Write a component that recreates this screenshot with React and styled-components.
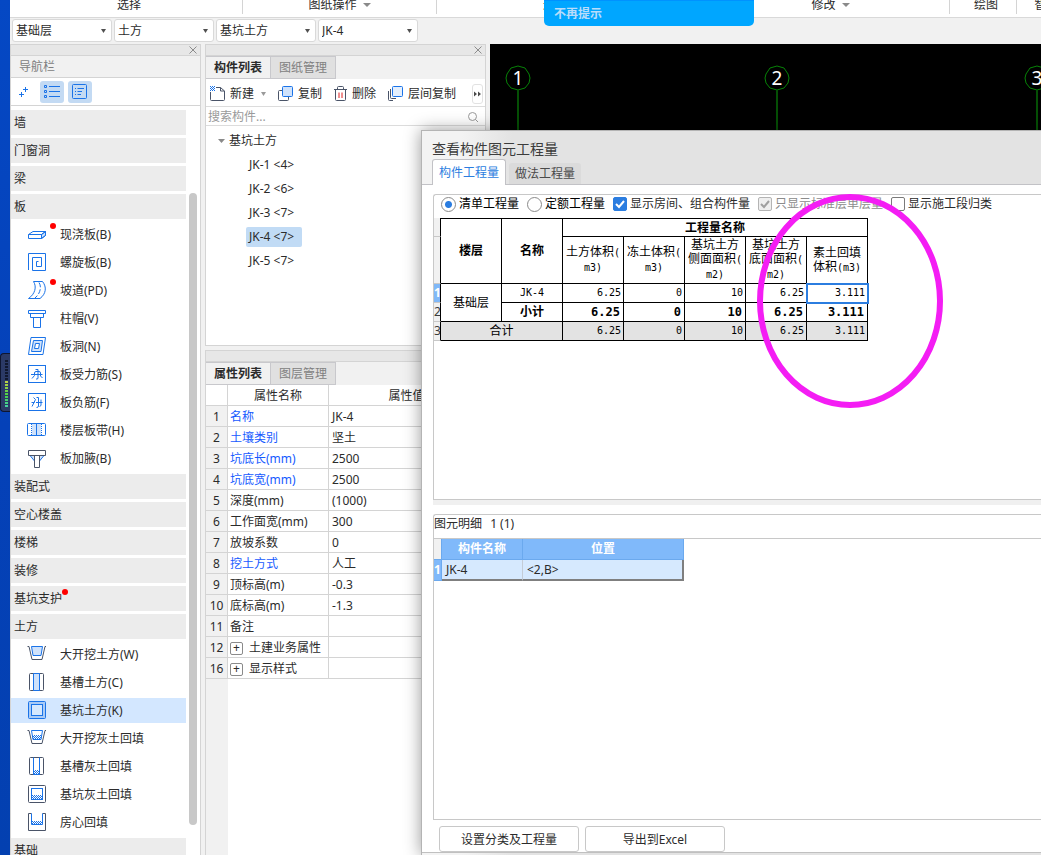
import React, { useState } from 'react';
import styled, { createGlobalStyle, css } from 'styled-components';

const BLUE = '#1a73e8';
const DARK = '#4a5468';
const PALE = '#cfe2fb';

const ribbonGroups = [
    { label: '选择', width: 233 },
    { label: '图纸操作', width: 194, arrow: true },
    { label: '通用操作', width: 275, arrow: true },
    { label: '修改', width: 238, arrow: true },
    { label: '绘图', width: 67 },
    { label: '智能布置', width: 78 },
];

const filters = [
    { name: '楼层', value: '基础层' },
    { name: '构件大类', value: '土方' },
    { name: '构件类型', value: '基坑土方' },
    { name: '构件', value: 'JK-4' },
];

const navRows = [
    { group: '墙' },
    { group: '门窗洞' },
    { group: '梁' },
    { group: '板' },
    { item: '现浇板(B)', icon: 'slab', dot: true },
    { item: '螺旋板(B)', icon: 'spiral' },
    { item: '坡道(PD)', icon: 'ramp', dot: true },
    { item: '柱帽(V)', icon: 'cap' },
    { item: '板洞(N)', icon: 'hole' },
    { item: '板受力筋(S)', icon: 'rebar' },
    { item: '板负筋(F)', icon: 'negRebar' },
    { item: '楼层板带(H)', icon: 'band' },
    { item: '板加腋(B)', icon: 'haunch' },
    { group: '装配式' },
    { group: '空心楼盖' },
    { group: '楼梯' },
    { group: '装修' },
    { group: '基坑支护', dot: true },
    { group: '土方' },
    { item: '大开挖土方(W)', icon: 'openCut' },
    { item: '基槽土方(C)', icon: 'trench' },
    { item: '基坑土方(K)', icon: 'pit' },
    { item: '大开挖灰土回填', icon: 'openCutFill' },
    { item: '基槽灰土回填', icon: 'trenchFill' },
    { item: '基坑灰土回填', icon: 'pitFill' },
    { item: '房心回填', icon: 'roomFill' },
    { group: '基础' },
];

const components = ['JK-1 <4>', 'JK-2 <6>', 'JK-3 <7>', 'JK-4 <7>', 'JK-5 <7>'];

const properties = [
    { no: 1, name: '名称', value: 'JK-4', blue: true },
    { no: 2, name: '土壤类别', value: '坚土', blue: true },
    { no: 3, name: '坑底长(mm)', value: '2500', blue: true },
    { no: 4, name: '坑底宽(mm)', value: '2500', blue: true },
    { no: 5, name: '深度(mm)', value: '(1000)' },
    { no: 6, name: '工作面宽(mm)', value: '300' },
    { no: 7, name: '放坡系数', value: '0' },
    { no: 8, name: '挖土方式', value: '人工', blue: true },
    { no: 9, name: '顶标高(m)', value: '-0.3' },
    { no: 10, name: '底标高(m)', value: '-1.3' },
    { no: 11, name: '备注', value: '' },
    { no: 12, name: '土建业务属性', value: '', expand: true },
    { no: 16, name: '显示样式', value: '', expand: true },
];

const quantities = ['6.25', '0', '10', '6.25', '3.111'];

const glyphs = {
    slab: (
        <>
            <path d="M14.5 10.5L18.5 7.5V11.5L14.5 14.5Z" fill={PALE} />
            <path d="M1.5 10.5H14.5V14.5H1.5ZM1.5 10.5L6 7.5H18.5L14.5 10.5M18.5 7.5V11.5L14.5 14.5" />
        </>
    ),
    spiral: <path d="M1.5 18V1.5H18.5V18.5H5.5V5.5H14.5V14.5H9.5V9.5H11.5" />,
    ramp: (
        <>
            <path d="M6.5 1.5H15.5C20 7 19 14 13 18.5H1.5C8 14 10 7 6.5 1.5Z" />
            <path d="M12 2.5C15 7 13 14 8 18" strokeDasharray="5 2" />
        </>
    ),
    cap: <path d="M1.5 2.5H18.5V5.5H1.5ZM3.5 5.5V9.5H16.5V5.5M6.5 9.5V19.5H13.5V9.5" />,
    hole: (
        <>
            <path d="M4 1.5H18.5L16 18.5H1.5Z" />
            <path d="M6.5 4.5H15.5L14 15.5H4.5Z" fill={PALE} />
            <path d="M8.5 7.5H12.5L11.5 12.5H7.5Z" fill="#fff" />
        </>
    ),
    rebar: (
        <>
            <rect x="1.5" y="1.5" width="17" height="17" />
            <path d="M4 10.5H15.5M8.5 5.5H11V14Q11 15.5 9 15M5 14.5L7.5 11.5V9Q7.5 7.5 9 7.5H12Q13.5 7.5 13.5 9V12L15.5 14" />
        </>
    ),
    negRebar: (
        <>
            <rect x="1.5" y="1.5" width="17" height="17" />
            <path d="M4.5 10.5H7.5M5 14.5L8.5 7.5L6.5 5.5M9 10.5H15.5M9.5 5.5H11.5V14Q11.5 15.5 9.5 15.5M14 7.5V13.5L12.5 14.5" />
        </>
    ),
    band: (
        <>
            <rect x="5" y="4" width="9" height="12" fill={PALE} stroke="none" />
            <rect x="0.5" y="3.5" width="18" height="12" rx="1" />
            <path d="M9.5 3.5V15.5" />
            <path d="M4.5 4V15.5M14.5 4V15.5" strokeDasharray="1 1" />
        </>
    ),
    haunch: (
        <>
            <path d="M3 7.5L7.5 13V7.5M17 7.5L12.5 13V7.5" fill={PALE} />
            <path d="M1.5 2.5H18.5V7.5H1.5ZM7.5 7.5V19.5H12.5V7.5" stroke={DARK} />
        </>
    ),
    openCut: (
        <>
            <path d="M0.5 2.5H2L5 15.5H15L18 2.5H19" stroke={DARK} />
            <path d="M4.5 2.5H15.5L14 11.5H6Z" fill={PALE} />
        </>
    ),
    trench: (
        <>
            <rect x="2.5" y="1.5" width="14" height="17" rx="1" stroke={DARK} />
            <path d="M6.5 1.5H12.5V18.5H6.5Z" fill={PALE} />
        </>
    ),
    pit: (
        <>
            <rect x="1.5" y="1.5" width="17" height="17" rx="1" fill="#a9cbf6" />
            <rect x="4.5" y="4.5" width="11" height="11" fill="#d5e8fe" />
        </>
    ),
    openCutFill: (
        <>
            <path d="M0.5 2.5H2L5 15.5H15L18 2.5H19" stroke={DARK} />
            <path d="M5 7H15L14 12H6Z" fill="url(#soil)" stroke="none" />
            <path d="M4.5 2.5L6 11.5H14L15.5 2.5Z" />
        </>
    ),
    trenchFill: (
        <>
            <rect x="2.5" y="1.5" width="14" height="17" rx="1" stroke={DARK} />
            <rect x="7" y="14" width="5" height="4" fill="url(#soil)" stroke="none" />
            <path d="M6.5 1.5V18.5H12.5V1.5" />
        </>
    ),
    pitFill: (
        <>
            <rect x="1.5" y="1.5" width="17" height="17" rx="1" stroke={DARK} />
            <rect x="5" y="11" width="10" height="4" fill="url(#soil)" stroke="none" />
            <rect x="4.5" y="4.5" width="11" height="11" />
        </>
    ),
    roomFill: (
        <>
            <path d="M4.5 1.5H1.5V18.5H18.5V1.5H15.5" stroke={DARK} />
            <rect x="5" y="9" width="10" height="3" fill="url(#soil)" stroke="none" />
            <path d="M4.5 1.5V12.5H15.5V1.5" />
        </>
    ),
};

// checkered fill shared by the backfill icons and the "new" icon
function SoilPattern() {
    return (
        <svg width="0" height="0" aria-hidden="true">
            <defs>
                <pattern id="soil" width="2" height="2" patternUnits="userSpaceOnUse">
                    <path d="M0 0H1V1H0ZM1 1H2V2H1Z" fill={BLUE} stroke="none" />
                </pattern>
            </defs>
        </svg>
    );
}

function NavIcon({ name }) {
    return (
        <svg width="20" height="21" viewBox="0 0 20 21" fill="none" stroke={BLUE} aria-hidden="true">
            {glyphs[name]}
        </svg>
    );
}

function Arrow({ size = 7, color = '#8a8a8a' }) {
    return (
        <svg width={size} height="4" viewBox="0 0 8 4" preserveAspectRatio="none" aria-hidden="true">
            <path d="M0 0H8L4 4Z" fill={color} />
        </svg>
    );
}

function PanelStrip({ closable }) {
    return (
        <Strip>
            {closable && (
                <CloseButton aria-label="关闭">
                    <svg width="8" height="8" viewBox="0 0 8 8" stroke="#8c8c8c">
                        <path d="M0.5 0.5L7.5 7.5M7.5 0.5L0.5 7.5" />
                    </svg>
                </CloseButton>
            )}
        </Strip>
    );
}

function Navigation() {
    const [active, setActive] = useState('基坑土方(K)');
    return (
        <NavPanel>
            <PanelStrip closable />
            <NavTitle>导航栏</NavTitle>
            <NavTools>
                <ToolToggle aria-label="添加">
                    <svg width="10" height="12" viewBox="0 0 10 12" stroke={BLUE} fill="none">
                        <path d="M6.5 1V6M4 3.5H9M2.5 6V11M0 8.5H5" />
                    </svg>
                </ToolToggle>
                <ToolToggle $on aria-label="列表">
                    <svg width="16" height="15" viewBox="0 0 16 15" stroke={BLUE} fill="none">
                        <path d="M0.5 1.5h2v2h-2zM0.5 6.5h2v2h-2zM0.5 11.5h2v2h-2zM5 2.5H16M5 7.5H16M5 12.5H16" />
                    </svg>
                </ToolToggle>
                <ToolToggle $on aria-label="详细">
                    <svg width="16" height="16" viewBox="0 0 16 16" stroke={BLUE} fill="none">
                        <rect x="0.5" y="0.5" width="14" height="14" rx="1" />
                        <path d="M3 4.5h1M5.5 4.5H12M3 7.5h1M5.5 7.5H10M3 10.5h1M5.5 10.5H9" />
                    </svg>
                </ToolToggle>
            </NavTools>
            <NavBody>
                <NavList>
                    {navRows.map((row) =>
                        row.group ? (
                            <NavGroup key={row.group}>
                                <Dotted $dot={row.dot}>{row.group}</Dotted>
                            </NavGroup>
                        ) : (
                            <NavItem
                                key={row.item}
                                $active={row.item === active}
                                onClick={() => setActive(row.item)}
                            >
                                <Dotted $dot={row.dot} $away>
                                    <NavIcon name={row.icon} />
                                </Dotted>
                                {row.item}
                            </NavItem>
                        )
                    )}
                </NavList>
                <ScrollTrack>
                    <ScrollThumb />
                </ScrollTrack>
            </NavBody>
        </NavPanel>
    );
}

function ComponentList() {
    const [selected, setSelected] = useState('JK-4 <7>');
    return (
        <ListPanel>
            <PanelStrip closable />
            <Tabs>
                <Tab $active>构件列表</Tab>
                <Tab>图纸管理</Tab>
            </Tabs>
            <ListTools>
                <ListTool>
                    <svg width="17" height="17" viewBox="0 0 17 17" fill="none" stroke={DARK}>
                        <path d="M1.5 7V14.5Q1.5 15.5 2.5 15.5H14.5Q15.5 15.5 15.5 14.5V6L11.5 2.5H7M11.5 2.5V6H15.5" />
                        <rect x="1" y="1" width="5" height="5" fill="url(#soil)" stroke="none" />
                    </svg>
                    新建
                    <DropMark>
                        <Arrow size={5} color="#9a9a9a" />
                    </DropMark>
                </ListTool>
                <ListTool>
                    <svg width="17" height="17" viewBox="0 0 17 17" fill="none" stroke={DARK}>
                        <path d="M5 5.5H2.5Q1.5 5.5 1.5 6.5V14.5Q1.5 15.5 2.5 15.5H10.5Q11.5 15.5 11.5 14.5V12" />
                        <rect x="5.5" y="1.5" width="10" height="10" rx="1" fill={PALE} stroke={BLUE} />
                    </svg>
                    复制
                </ListTool>
                <ListTool>
                    <svg width="15" height="17" viewBox="0 0 15 17" fill="none" stroke={DARK}>
                        <path d="M1 4.5H14M4.5 4V2.5Q4.5 1.5 5.5 1.5H9.5Q10.5 1.5 10.5 2.5V4M2.5 4.5V14.5Q2.5 15.5 3.5 15.5H11.5Q12.5 15.5 12.5 14.5V4.5" />
                        <path d="M6 7.5V13M9 7.5V13" stroke="#e02020" />
                    </svg>
                    删除
                </ListTool>
                <ListTool>
                    <svg width="17" height="17" viewBox="0 0 17 17" fill="none" stroke={DARK}>
                        <path d="M1.5 6V14.5Q1.5 15.5 2.5 15.5H6M3.5 4V12.5Q3.5 13.5 4.5 13.5H9" />
                        <rect x="5.5" y="1.5" width="10" height="10" rx="1" fill="#e4effd" stroke={BLUE} />
                    </svg>
                    层间复制
                </ListTool>
                <MoreButton aria-label="更多">
                    <svg width="7" height="6" viewBox="0 0 7 6" fill="#4a4a4a">
                        <path d="M0 0.5L3 3L0 5.5ZM4 0.5L7 3L4 5.5Z" />
                    </svg>
                </MoreButton>
            </ListTools>
            <SearchRow>
                <SearchInput placeholder="搜索构件..." aria-label="搜索构件" />
                <svg width="12" height="12" viewBox="0 0 12 12" fill="none" stroke="#9a9a9a">
                    <circle cx="5.5" cy="5.5" r="4" />
                    <path d="M8.5 8.5L11 11" />
                </svg>
            </SearchRow>
            <Tree>
                <TreeRoot>
                    <Arrow size={7} />
                    基坑土方
                </TreeRoot>
                {components.map((name) => (
                    <li key={name}>
                        <TreeItem $active={name === selected} onClick={() => setSelected(name)}>
                            {name}
                        </TreeItem>
                    </li>
                ))}
            </Tree>
        </ListPanel>
    );
}

function PropertyList() {
    return (
        <PropPanel>
            <PanelStrip />
            <Tabs>
                <Tab $active>属性列表</Tab>
                <Tab>图层管理</Tab>
            </Tabs>
            <PropTable>
                <colgroup>
                    <col width="22" />
                    <col width="101" />
                    <col />
                </colgroup>
                <thead>
                    <tr>
                        <th aria-label="序号" />
                        <th>属性名称</th>
                        <th>属性值</th>
                    </tr>
                </thead>
                <tbody>
                    {properties.map((p) => (
                        <tr key={p.no}>
                            <PropNo>{p.no}</PropNo>
                            <PropName $blue={p.blue}>
                                {p.expand && <Expander aria-label={`展开${p.name}`}>+</Expander>}
                                {p.name}
                            </PropName>
                            <td>{p.value}</td>
                        </tr>
                    ))}
                </tbody>
            </PropTable>
            <PropRest />
        </PropPanel>
    );
}

function AxisMark({ x, label }) {
    return (
        <g>
            <path
                d={`M${x} 22L${x + 7} 24L${x + 11} 30L${x + 12} 34L${x + 11} 39L${x + 7} 44L${x} 46L${x - 7} 44L${x - 11} 39L${x - 12} 34L${x - 11} 30L${x - 7} 24Z`}
                fill="none"
                stroke="#078207"
            />
            <path d={`M${x} 46V900`} stroke="#054f05" strokeWidth="2" />
            <text x={x} y="41" textAnchor="middle" fill="#fff" fontSize="19">{label}</text>
        </g>
    );
}

function QuantityDialog() {
    const [mode, setMode] = useState('list');
    return (
        <Dialog role="dialog" aria-labelledby="dialog-title">
            <DialogTitle id="dialog-title">查看构件图元工程量</DialogTitle>
            <DialogTabs>
                <DialogTab $active>构件工程量</DialogTab>
                <DialogTab>做法工程量</DialogTab>
            </DialogTabs>
            <DialogBody>
                <Pane>
                    <Options>
                        <Option $strong>
                            <Radio name="mode" checked={mode === 'list'} onChange={() => setMode('list')} />
                            清单工程量
                        </Option>
                        <Option $strong>
                            <Radio name="mode" checked={mode === 'quota'} onChange={() => setMode('quota')} />
                            定额工程量
                        </Option>
                        <Option>
                            <Check defaultChecked />
                            显示房间、组合构件量
                        </Option>
                        <Option $disabled>
                            <Check defaultChecked disabled />
                            只显示标准层单层量
                        </Option>
                        <Option>
                            <Check />
                            显示施工段归类
                        </Option>
                    </Options>
                    <QuantityTable>
                        <colgroup>
                            <col width="7" />
                            {[1, 2, 3, 4, 5, 6, 7].map((n) => (
                                <col key={n} width="61" />
                            ))}
                        </colgroup>
                        <thead>
                            <TitleRow>
                                <RowMark aria-label="序号" />
                                <th rowSpan={2}>楼层</th>
                                <th rowSpan={2}>名称</th>
                                <th colSpan={5}>工程量名称</th>
                            </TitleRow>
                            <HeadRow>
                                <RowMark />
                                <th>土方体积<Half>(</Half><br /><Half>m3)</Half></th>
                                <th>冻土体积<Half>(</Half><br /><Half>m3)</Half></th>
                                <th>基坑土方<br />侧面面积<Half>(</Half><br /><Half>m2)</Half></th>
                                <th>基坑土方<br />底面面积<Half>(</Half><br /><Half>m2)</Half></th>
                                <th>素土回填<br />体积<Half>(m3)</Half></th>
                            </HeadRow>
                        </thead>
                        <tbody>
                            <tr>
                                <RowMark $active>1</RowMark>
                                <td rowSpan={2}>基础层</td>
                                <SongCell>JK-4</SongCell>
                                {quantities.map((q, i) => (
                                    <NumCell key={i} $selected={i === 4}>{q}</NumCell>
                                ))}
                            </tr>
                            <SubtotalRow>
                                <RowMark>2</RowMark>
                                <td>小计</td>
                                {quantities.map((q, i) => (
                                    <NumCell key={i} $bold>{q}</NumCell>
                                ))}
                            </SubtotalRow>
                            <TotalRow>
                                <RowMark>3</RowMark>
                                <td colSpan={2}>合计</td>
                                {quantities.map((q, i) => (
                                    <NumCell key={i}>{q}</NumCell>
                                ))}
                            </TotalRow>
                        </tbody>
                    </QuantityTable>
                </Pane>
                <Splitter />
                <Pane>
                    <DetailTitle>
                        图元明细 <span>1 (1)</span>
                    </DetailTitle>
                    <DetailTable>
                        <colgroup>
                            <col width="8" />
                            <col width="81" />
                            <col width="161" />
                        </colgroup>
                        <thead>
                            <tr>
                                <DetailMark aria-label="序号" />
                                <th>构件名称</th>
                                <th>位置</th>
                            </tr>
                        </thead>
                        <tbody>
                            <tr>
                                <DetailMark $active>1</DetailMark>
                                <td>JK-4</td>
                                <td>{'<2,B>'}</td>
                            </tr>
                        </tbody>
                    </DetailTable>
                </Pane>
            </DialogBody>
            <DialogFooter>
                <FooterButton>设置分类及工程量</FooterButton>
                <FooterButton>导出到Excel</FooterButton>
            </DialogFooter>
        </Dialog>
    );
}

function App() {
    return (
        <Screen>
            <GlobalStyle />
            <Desktop>
                <SoilPattern />
                <Meter>
                    {Array.from({ length: 16 }, (_, i) => (
                        <MeterBar key={i} style={{ background: i < 7 ? '#10182e' : `hsl(${70 + (i - 7) * 11}, 60%, 55%)` }} />
                    ))}
                </Meter>
            </Desktop>
            <Workspace>
                <Ribbon>
                    {ribbonGroups.map((g) => (
                        <RibbonGroup key={g.label} $width={g.width} $arrow={g.arrow}>
                            {g.label}
                            {g.arrow && <Arrow size={8} />}
                        </RibbonGroup>
                    ))}
                </Ribbon>
                <FilterBar>
                    {filters.map((f) => (
                        <SelectBox key={f.name}>
                            <Select aria-label={f.name}>
                                <option>{f.value}</option>
                            </Select>
                            <Arrow size={5} color="#505050" />
                        </SelectBox>
                    ))}
                </FilterBar>
                <Main>
                    <Navigation />
                    <Middle>
                        <ComponentList />
                        <PropertyList />
                    </Middle>
                    <Canvas>
                        <svg width="100%" height="100%" fontFamily="'Noto Sans', sans-serif">
                            <AxisMark x={28} label="1" />
                            <AxisMark x={287} label="2" />
                            <AxisMark x={547} label="3" />
                        </svg>
                    </Canvas>
                </Main>
            </Workspace>
            <Toast>不再提示</Toast>
            <QuantityDialog />
            <Marker width="188" height="216" viewBox="0 0 188 216" aria-hidden="true">
                <ellipse cx="94" cy="108" rx="90" ry="104" fill="none" stroke="#f41df4" strokeWidth="6" />
            </Marker>
        </Screen>
    );
}

const GlobalStyle = createGlobalStyle`
    *{
        box-sizing: border-box;
    }
    body{
        margin: 0;
        overflow: hidden;
        color: #2b2b2b;
        font: 12px/18px "Noto Sans", "Noto Sans CJK SC", sans-serif;
    }
    button, input, select{
        font: inherit;
        color: inherit;
        margin: 0;
        padding: 0;
        border: none;
        background: none;
    }
    svg{
        display: block;
        flex: none;
    }
    table{
        border-collapse: separate;
        border-spacing: 0;
        table-layout: fixed;
    }
    th, td{
        padding: 0;
        font-weight: normal;
        white-space: nowrap;
        overflow: hidden;
    }
`;

const Screen = styled.div`
    position: relative;
    display: flex;
    height: 100vh;
    overflow: hidden;
    background: #f1f1f1;
`;

const Desktop = styled.div`
    position: relative;
    flex: 0 0 10px;
    background: linear-gradient(#0548c4, #0541b8 50%, #0340b0);
`;

const Meter = styled.div`
    position: absolute;
    top: 353px;
    left: 0;
    width: 10px;
    height: 59px;
    padding: 6px 2px 0 4px;
    display: flex;
    flex-direction: column;
    gap: 1px;
    background: #2b3a66;
    border: 1px solid #0e1630;
    border-right: none;
    border-radius: 4px 0 0 4px;
`;

const MeterBar = styled.i`
    height: 2px;
`;

const Workspace = styled.div`
    flex: 1;
    min-width: 0;
    display: flex;
    flex-direction: column;
`;

const Ribbon = styled.div`
    display: flex;
    align-items: flex-end;
    height: 18px;
    padding-bottom: 3px;
    overflow: hidden;
    background: #fff;
    border-bottom: 1px solid #d9d9d9;
`;

const RibbonGroup = styled.div`
    flex: 0 0 ${(p) => p.$width}px;
    display: flex;
    align-items: center;
    justify-content: center;
    gap: 6px;
    padding-left: ${(p) => (p.$arrow ? '0' : '6px')};
    border-right: 1px solid #d4d4d4;
    line-height: 18px;
    white-space: nowrap;
`;

const FilterBar = styled.div`
    display: flex;
    gap: 2px;
    height: 26px;
    padding: 1px 2px 2px;
`;

const SelectBox = styled.div`
    display: flex;
    align-items: center;
    width: 100px;
    padding: 0 5px 0 3px;
    background: #fff;
    border: 1px solid #d9d9d9;
    border-radius: 3px;
`;

const Select = styled.select`
    flex: 1;
    min-width: 0;
    appearance: none;
    outline: none;
`;

const Main = styled.div`
    flex: 1;
    min-height: 0;
    display: flex;
`;

const NavPanel = styled.nav`
    flex: 0 0 191px;
    display: flex;
    flex-direction: column;
    background: #fff;
    border: solid #d4d4d4;
    border-width: 0 1px;
`;

const Strip = styled.div`
    flex: none;
    display: flex;
    align-items: center;
    justify-content: flex-end;
    height: 12px;
    padding-right: 3px;
    background: #e7e7e7;
    border: solid #d4d4d4;
    border-width: 1px 0;
`;

const CloseButton = styled.button`
    display: flex;
`;

const NavTitle = styled.h2`
    margin: 0;
    padding-left: 8px;
    font-size: 12px;
    font-weight: normal;
    line-height: 21px;
    color: #808080;
    background: #f1f1f1;
    border-bottom: 1px solid #d4d4d4;
`;

const NavTools = styled.div`
    flex: none;
    display: flex;
    align-items: center;
    gap: 4px;
    height: 28px;
    padding-left: 1px;
    border-bottom: 1px solid #d4d4d4;
`;

const ToolToggle = styled.button`
    display: flex;
    align-items: center;
    justify-content: center;
    width: 24px;
    height: 22px;
    border-radius: 3px;
    background: ${(p) => (p.$on ? '#c3daf3' : 'transparent')};
`;

const NavBody = styled.div`
    flex: 1;
    min-height: 0;
    display: flex;
    gap: 3px;
`;

const NavList = styled.div`
    flex: 1;
    display: flex;
    flex-direction: column;
    gap: 3px;
    padding-top: 4px;
    overflow: hidden;
`;

const rowStyle = css`
    flex: none;
    display: flex;
    align-items: center;
    height: 25px;
    text-align: left;
`;

const NavGroup = styled.button`
    ${rowStyle}
    padding-left: 3px;
    background: #ececec;
`;

const NavItem = styled.button`
    ${rowStyle}
    gap: 13px;
    padding-left: 16px;
    background: ${(p) => (p.$active ? '#d3e7ff' : 'transparent')};
`;

const Dotted = styled.span`
    position: relative;
    ${(p) =>
        p.$dot &&
        css`
            &::after{
                content: "";
                position: absolute;
                top: -1px;
                right: ${p.$away ? '-9px' : '-6px'};
                width: 6px;
                height: 6px;
                border-radius: 50%;
                background: #f00;
            }
        `}
`;

const ScrollTrack = styled.div`
    width: 11px;
    padding: 87px 3px 30px 0;
`;

const ScrollThumb = styled.div`
    height: 100%;
    border-radius: 4px;
    background: #c8c8c8;
`;

const Middle = styled.div`
    flex: 0 0 281px;
    display: flex;
    flex-direction: column;
    gap: 4px;
    margin: 0 4px;
`;

const ListPanel = styled.section`
    flex: 0 0 302px;
    display: flex;
    flex-direction: column;
    background: #fff;
    border: solid #d4d4d4;
    border-width: 0 1px 1px;
`;

const Tabs = styled.div`
    flex: none;
    display: flex;
    height: 23px;
    background: #f1f1f1;
`;

const Tab = styled.button`
    width: 65px;
    border: 1px solid #c8c8cc;
    border-left: none;
    line-height: 21px;
    color: ${(p) => (p.$active ? '#2b2b2b' : '#808080')};
    font-weight: ${(p) => (p.$active ? 'bold' : 'normal')};
    background: ${(p) => (p.$active ? '#f1f1f1' : '#e0e0e0')};
`;

const ListTools = styled.div`
    flex: none;
    display: flex;
    align-items: center;
    gap: 11px;
    height: 28px;
    padding: 2px 2px 0 3px;
    border-bottom: 1px solid #dcdcdc;
`;

const ListTool = styled.button`
    flex: none;
    display: flex;
    align-items: center;
    gap: 4px;
`;

const DropMark = styled.span`
    padding-left: 3px;
`;

const MoreButton = styled.button`
    display: flex;
    align-items: center;
    justify-content: center;
    width: 11px;
    height: 20px;
    margin-left: auto;
    border: 1px solid #e2e2e2;
    border-radius: 3px;
`;

const SearchRow = styled.div`
    flex: none;
    display: flex;
    align-items: center;
    height: 19px;
    padding: 2px 6px 0 2px;
    border-bottom: 1px solid #dcdcdc;
`;

const SearchInput = styled.input`
    flex: 1;
    outline: none;
    &::placeholder{
        color: #9a9a9a;
    }
`;

const Tree = styled.ul`
    margin: 0;
    padding: 3px 0 0 12px;
    list-style: none;
    line-height: 24px;
    li{
        height: 24px;
    }
`;

const TreeRoot = styled.li`
    display: flex;
    align-items: center;
    gap: 4px;
`;

const TreeItem = styled.button`
    margin-left: 28px;
    padding: 0 8px 0 3px;
    line-height: 20px;
    border-radius: 2px;
    background: ${(p) => (p.$active ? '#c1dbf5' : 'transparent')};
`;

const PropPanel = styled.section`
    flex: 1;
    min-height: 0;
    display: flex;
    flex-direction: column;
    background: #fff;
    border: solid #d4d4d4;
    border-width: 0 1px;
`;

const PropTable = styled.table`
    width: 100%;
    th, td{
        height: 21px;
        padding-top: 2px;
        border: solid #d4d4d4;
        border-width: 0 1px 1px 0;
        line-height: 18px;
    }
    td:last-child{
        padding-left: 3px;
    }
`;

const PropNo = styled.td`
    text-align: center;
    background: #f1f1f1;
`;

const PropName = styled.td`
    padding-left: 2px;
    color: ${(p) => (p.$blue ? '#165aff' : 'inherit')};
`;

const Expander = styled.button`
    width: 13px;
    height: 13px;
    margin-right: 6px;
    border: 1px solid #8a8a8a;
    border-radius: 2px;
    line-height: 10px;
`;

const PropRest = styled.div`
    flex: 1;
    border-left: 22px solid #f1f1f1;
`;

const Canvas = styled.div`
    flex: 1;
    min-width: 0;
    background: #000;
    overflow: hidden;
`;

const Toast = styled.div`
    position: absolute;
    top: 0;
    left: 544px;
    width: 210px;
    height: 26px;
    padding-left: 10px;
    line-height: 26px;
    color: #b9dcfa;
    font-weight: bold;
    background: #00a6ff;
    border-top: 1px solid #0092ff;
    border-radius: 0 0 5px 5px;
`;

const Dialog = styled.div`
    position: absolute;
    top: 130px;
    left: 421px;
    right: 0;
    bottom: 0;
    display: flex;
    flex-direction: column;
    background: linear-gradient(90deg, #f3f3f3 40px, #e3e3e3 90px);
    border: solid #b4b4b4;
    border-width: 1px 0 0 1px;
    box-shadow: 0 0 16px rgba(0, 0, 0, 0.4);
`;

const DialogTitle = styled.h1`
    margin: 0;
    padding: 8px 0 0 10px;
    font-size: 14px;
    font-weight: normal;
    line-height: 20px;
    color: #3c3c3c;
`;

const DialogTabs = styled.div`
    flex: none;
    display: flex;
    align-items: flex-end;
    gap: 3px;
    height: 26px;
    padding-left: 10px;
    background: linear-gradient(#c2c2c6, #c2c2c6) bottom / 100% 1px no-repeat;
`;

const DialogTab = styled.button`
    width: ${(p) => (p.$active ? '74px' : '72px')};
    line-height: ${(p) => (p.$active ? '25px' : '21px')};
    margin-bottom: ${(p) => (p.$active ? '0' : '1px')};
    color: ${(p) => (p.$active ? '#2b7de0' : '#4a4a4a')};
    background: ${(p) => (p.$active ? '#fff' : '#dbdbdb')};
    border: ${(p) => (p.$active ? '1px solid #c2c2c6' : 'none')};
    border-bottom: none;
    border-radius: 3px 3px 0 0;
`;

const DialogBody = styled.div`
    flex: 1;
    min-height: 0;
    display: flex;
    flex-direction: column;
    padding: 9px 0 0 11px;
    background: #fff;
`;

const Pane = styled.section`
    flex: 1 1 0;
    min-height: 0;
    overflow: hidden;
    border: 1px solid #c8c8c8;
    border-right: none;
    border-radius: 3px 0 0 0;
`;

const Splitter = styled.div`
    height: 5px;
    margin-bottom: 9px;
    background: #f0f0f0;
`;

const Options = styled.div`
    display: flex;
    align-items: center;
    height: 23px;
    padding: 0 0 5px 7px;
    gap: 8px;
`;

const Option = styled.label`
    display: flex;
    align-items: center;
    gap: 3px;
    white-space: nowrap;
    color: ${(p) => (p.$disabled ? '#8c8c8c' : p.$strong ? '#000' : '#2b2b2b')};
`;

const Radio = styled.input.attrs({ type: 'radio' })`
    appearance: none;
    flex: none;
    width: 15px;
    height: 15px;
    border: 1px solid #8a8a8a;
    border-radius: 50%;
    background: #fff;
    &:checked{
        background: radial-gradient(circle, #2b7de0 3px, #fff 4px);
    }
`;

const CHECK = (color) =>
    `url("data:image/svg+xml,%3Csvg xmlns='http://www.w3.org/2000/svg' viewBox='0 0 14 14' fill='none' stroke='${color}' stroke-width='2'%3E%3Cpath d='M3 7L6 10L11 4'/%3E%3C/svg%3E")`;

const Check = styled.input.attrs({ type: 'checkbox' })`
    appearance: none;
    flex: none;
    width: 14px;
    height: 14px;
    border: 1px solid #7a7a7a;
    border-radius: 2px;
    background: #fff;
    &:checked{
        border-color: #2b7de0;
        background: #2b7de0 ${CHECK('white')} center / 14px;
    }
    &:disabled{
        border-color: #b4b4b4;
        background: #efefef ${CHECK('%23a0a0a0')} center / 14px;
    }
`;

const QuantityTable = styled.table`
    width: 434px;
    color: #000;
    line-height: 14px;
    text-align: center;
    th, td{
        height: 19px;
        border: solid #000;
        border-width: 0 1px 1px 0;
    }
`;

const TitleRow = styled.tr`
    th{
        height: 19px;
        border-top-width: 1px;
        font-weight: bold;
    }
`;

const HeadRow = styled.tr`
    th{
        height: 47px;
    }
`;

const SubtotalRow = styled.tr`
    td{
        font-weight: bold;
    }
`;

const TotalRow = styled.tr`
    td{
        background: #e3e3e3;
    }
`;

const RowMark = styled.td`
    && {
        border-color: #c8c8c8 #000 #c8c8c8 #c8c8c8;
        color: ${(p) => (p.$active ? '#fff' : '#3c3c3c')};
        font-weight: ${(p) => (p.$active ? 'bold' : 'normal')};
        background: ${(p) => (p.$active ? '#80b8f8' : '#f1f1f1')};
    }
`;

const Half = styled.span`
    font-family: "DejaVu Sans Mono", monospace;
    font-size: 10px;
`;

const SongCell = styled.td`
    font-family: "DejaVu Sans Mono", monospace;
    font-size: 10px;
`;

const NumCell = styled.td`
    padding-right: ${(p) => (p.$bold ? '3px' : '2px')};
    text-align: right;
    font-family: "DejaVu Sans Mono", monospace;
    font-size: ${(p) => (p.$bold ? '12px' : '10px')};
    ${(p) =>
        p.$selected &&
        css`
            outline: 2px solid #2b7de0;
            outline-offset: -1px;
        `}
`;

const DetailTitle = styled.h3`
    margin: 0;
    font-size: 12px;
    font-weight: normal;
    line-height: 18px;
    padding-bottom: 5px;
    border-bottom: 1px solid #c8c8c8;
    span{
        margin-left: 5px;
    }
`;

const DetailTable = styled.table`
    width: 250px;
    line-height: 18px;
    th{
        height: 21px;
        color: #fff;
        font-weight: bold;
        background: #80b9fa;
        border: solid #6ba9ee;
        border-width: 0 1px 1px 0;
    }
    td{
        height: 21px;
        padding-left: 4px;
        background: #d6e9fe;
        border-right: 1px solid #c4ccd6;
        border-bottom: 2px solid #7f7f7f;
    }
    td:last-child{
        border-right: 2px solid #7f7f7f;
    }
`;

const DetailMark = styled.td`
    && {
        padding: 0;
        text-align: center;
        color: #fff;
        font-weight: bold;
        background: ${(p) => (p.$active ? '#80b9fa' : '#f1f1f1')};
        border: solid #6ba9ee;
        border-width: 0 1px 1px 0;
    }
`;

const DialogFooter = styled.div`
    flex: none;
    display: flex;
    gap: 6px;
    margin-bottom: 2px;
    padding: 6px 0 0 17px;
    background: #fff;
    border-bottom: 1px solid #c0c0c0;
`;

const FooterButton = styled.button`
    width: 140px;
    height: 26px;
    padding-top: 2px;
    border: 1px solid #c8c8c8;
    border-radius: 3px;
    background: #fff;
`;

const Marker = styled.svg`
    position: absolute;
    top: 193px;
    left: 756px;
    pointer-events: none;
`;

export default App;
